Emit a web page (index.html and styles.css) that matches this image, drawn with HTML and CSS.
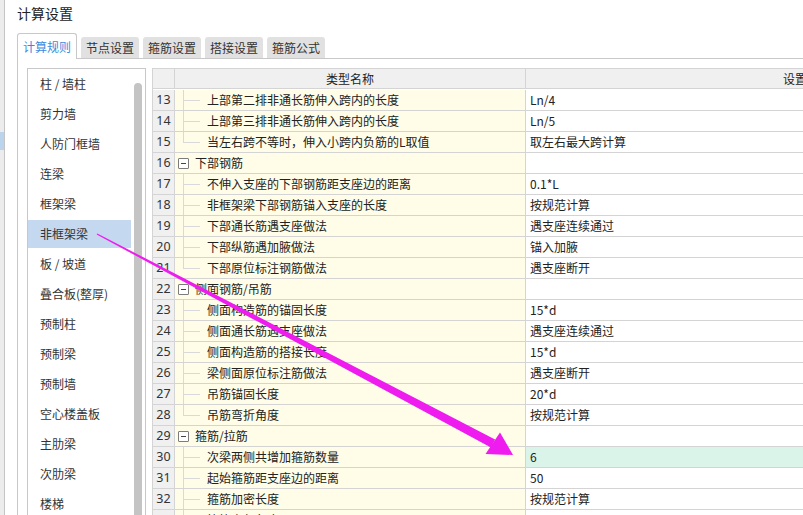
FILE: index.html
```html
<!DOCTYPE html>
<html lang="zh">
<head>
<meta charset="utf-8">
<title>计算设置</title>
<link rel="stylesheet" href="styles.css">
</head>
<body>
<div class="strip"><div class="strip-sel"></div></div>
<div class="dialog">
  <div class="title">计算设置</div>
  <div class="tabs">
    <div class="tab active">计算规则</div>
    <div class="tab">节点设置</div>
    <div class="tab">箍筋设置</div>
    <div class="tab">搭接设置</div>
    <div class="tab">箍筋公式</div>
  </div>
  <div class="panel">
    <div class="listbox">
      <div class="items">
        <div class="item">柱 / 墙柱</div>
        <div class="item">剪力墙</div>
        <div class="item">人防门框墙</div>
        <div class="item">连梁</div>
        <div class="item">框架梁</div>
        <div class="item selected">非框架梁</div>
        <div class="item">板 / 坡道</div>
        <div class="item">叠合板(整厚)</div>
        <div class="item">预制柱</div>
        <div class="item">预制梁</div>
        <div class="item">预制墙</div>
        <div class="item">空心楼盖板</div>
        <div class="item">主肋梁</div>
        <div class="item">次肋梁</div>
        <div class="item">楼梯</div>
      </div>
      <div class="scroll"><div class="thumb"></div></div>
    </div>
    <div class="grid">
      <div class="c hd num"></div><div class="c hd name-h">类型名称</div><div class="c hd val-h">设置值</div>

      <div class="c num">13</div><div class="c name child">上部第二排非通长筋伸入跨内的长度</div><div class="c val">Ln/4</div>
      <div class="c num">14</div><div class="c name child">上部第三排非通长筋伸入跨内的长度</div><div class="c val">Ln/5</div>
      <div class="c num">15</div><div class="c name child last">当左右跨不等时，伸入小跨内负筋的L取值</div><div class="c val">取左右最大跨计算</div>
      <div class="c num">16</div><div class="c name group"><span class="box"></span>下部钢筋</div><div class="c val"></div>
      <div class="c num">17</div><div class="c name child">不伸入支座的下部钢筋距支座边的距离</div><div class="c val">0.1*L</div>
      <div class="c num">18</div><div class="c name child">非框架梁下部钢筋锚入支座的长度</div><div class="c val">按规范计算</div>
      <div class="c num">19</div><div class="c name child">下部通长筋遇支座做法</div><div class="c val">遇支座连续通过</div>
      <div class="c num">20</div><div class="c name child">下部纵筋遇加腋做法</div><div class="c val">锚入加腋</div>
      <div class="c num">21</div><div class="c name child last">下部原位标注钢筋做法</div><div class="c val">遇支座断开</div>
      <div class="c num">22</div><div class="c name group"><span class="box"></span>侧面钢筋/吊筋</div><div class="c val"></div>
      <div class="c num">23</div><div class="c name child">侧面构造筋的锚固长度</div><div class="c val">15*d</div>
      <div class="c num">24</div><div class="c name child">侧面通长筋遇支座做法</div><div class="c val">遇支座连续通过</div>
      <div class="c num">25</div><div class="c name child">侧面构造筋的搭接长度</div><div class="c val">15*d</div>
      <div class="c num">26</div><div class="c name child">梁侧面原位标注筋做法</div><div class="c val">遇支座断开</div>
      <div class="c num">27</div><div class="c name child">吊筋锚固长度</div><div class="c val">20*d</div>
      <div class="c num">28</div><div class="c name child last">吊筋弯折角度</div><div class="c val">按规范计算</div>
      <div class="c num">29</div><div class="c name group"><span class="box"></span>箍筋/拉筋</div><div class="c val"></div>
      <div class="c num">30</div><div class="c name child">次梁两侧共增加箍筋数量</div><div class="c val hl">6</div>
      <div class="c num">31</div><div class="c name child">起始箍筋距支座边的距离</div><div class="c val">50</div>
      <div class="c num">32</div><div class="c name child">箍筋加密长度</div><div class="c val">按规范计算</div>
      <div class="c num">33</div><div class="c name child">箍筋弯勾角度</div><div class="c val">135°</div>
    </div>
  </div>
</div>
<svg class="arrow" width="803" height="515" viewBox="0 0 803 515">
  <polygon fill="#ee1cee" points="96.7,234.6 97.3,233.4 495.1,439.5 490.9,447.5"/>
  <polygon fill="#ee1cee" points="513,455 485.5,454 500,432.5"/>
</svg>
</body>
</html>
```

FILE: styles.css
```css
* { box-sizing: border-box; }
html, body { margin: 0; padding: 0; }
body {
  width: 803px;
  height: 515px;
  overflow: hidden;
  display: flex;
  background: #fff;
  font-family: "Noto Sans CJK SC", "Noto Sans", sans-serif;
  font-size: 12px;
  color: #222;
  position: relative;
}
.strip {
  width: 5px;
  flex: none;
  background: #ececec;
  border-right: 1px solid #c4c4c4;
}
.strip-sel {
  margin-top: 132px;
  height: 18px;
  background: #bcd3ee;
}
.dialog {
  flex: 1;
  min-width: 0;
  padding-left: 12px;
  display: flex;
  flex-direction: column;
}
.title {
  height: 26px;
  line-height: 26px;
  font-size: 14px;
  color: #222;
}
.tabs {
  margin-top: 7px;
  height: 26px;
  display: flex;
  align-items: flex-end;
  gap: 4px;
  border-bottom: 1px solid #c8c8c8;
}
.tab {
  height: 21px;
  line-height: 21px;
  padding: 0 5px;
  background: #e1e1e1;
  color: #333;
  border-radius: 3px 3px 0 0;
  white-space: nowrap;
}
.tab.active {
  height: 26px;
  line-height: 25px;
  margin-bottom: -1px;
  background: #fff;
  color: #3b8be0;
  border: 1px solid #c8c8c8;
  border-bottom: none;
  padding: 0 5px;
}
.panel {
  flex: 1;
  min-height: 0;
  border-left: 1px solid #c8c8c8;
  padding: 9px 0 0 9px;
  display: flex;
  gap: 6px;
  overflow: hidden;
}
.listbox {
  width: 119px;
  flex: none;
  border: 1px solid #c8c8c8;
  border-bottom: none;
  display: flex;
}
.items {
  width: 103px;
  padding-top: 1px;
}
.item {
  height: 30px;
  line-height: 28px;
  padding-left: 12px;
  color: #333;
  border-bottom: 2px solid transparent;
  background-clip: padding-box;
  white-space: nowrap;
}
.item.selected {
  background-color: #c4d9f0;
}
.scroll {
  flex: 1;
  padding: 14px 0 0 3px;
}
.thumb {
  width: 8px;
  height: 100%;
  background: #c4c4c4;
  border-radius: 4px 4px 0 0;
}
.grid {
  flex: none;
  display: grid;
  grid-template-columns: 22px 351px 551px;
  grid-auto-rows: 21px;
  border-left: 1px solid #d4d4d4;
  border-top: 1px solid #d4d4d4;
  align-self: flex-start;
}
.c {
  border-right: 1px solid #d4d4d4;
  border-bottom: 1px solid #d4d4d4;
  line-height: 20px;
  white-space: nowrap;
  overflow: hidden;
}
.hd {
  height: 20px;
  line-height: 19px;
  background: #f0f0f0;
  color: #222;
}
.name-h, .val-h { text-align: center; }
.num {
  background: #f0f0f0;
  text-align: center;
  font-family: "Noto Sans", "Noto Sans CJK SC", sans-serif;
  font-size: 12.5px;
  color: #333;
}
.name {
  background-color: #fffde7;
}
.name.child {
  padding-left: 32px;
  background:
    linear-gradient(#d9d9d9, #d9d9d9) 8px 0 / 1px 100% no-repeat,
    linear-gradient(#d9d9d9, #d9d9d9) 8px 10px / 17px 1px no-repeat,
    #fffde7;
}
.name.child.last {
  background:
    linear-gradient(#d9d9d9, #d9d9d9) 8px 0 / 1px 11px no-repeat,
    linear-gradient(#d9d9d9, #d9d9d9) 8px 10px / 17px 1px no-repeat,
    #fffde7;
}
.name.group {
  padding-left: 3px;
  display: flex;
  align-items: center;
  gap: 6px;
}
.box {
  width: 11px;
  height: 11px;
  border: 1px solid #7c7c7c;
  border-radius: 1px;
  background: linear-gradient(#444, #444) center / 5px 1px no-repeat, #fff;
  flex: none;
}
.val {
  background: #fff;
  padding-left: 4px;
}
.val.hl {
  background: #dbf4ea;
}
.arrow {
  position: absolute;
  top: 0;
  left: 0;
  pointer-events: none;
}
```
